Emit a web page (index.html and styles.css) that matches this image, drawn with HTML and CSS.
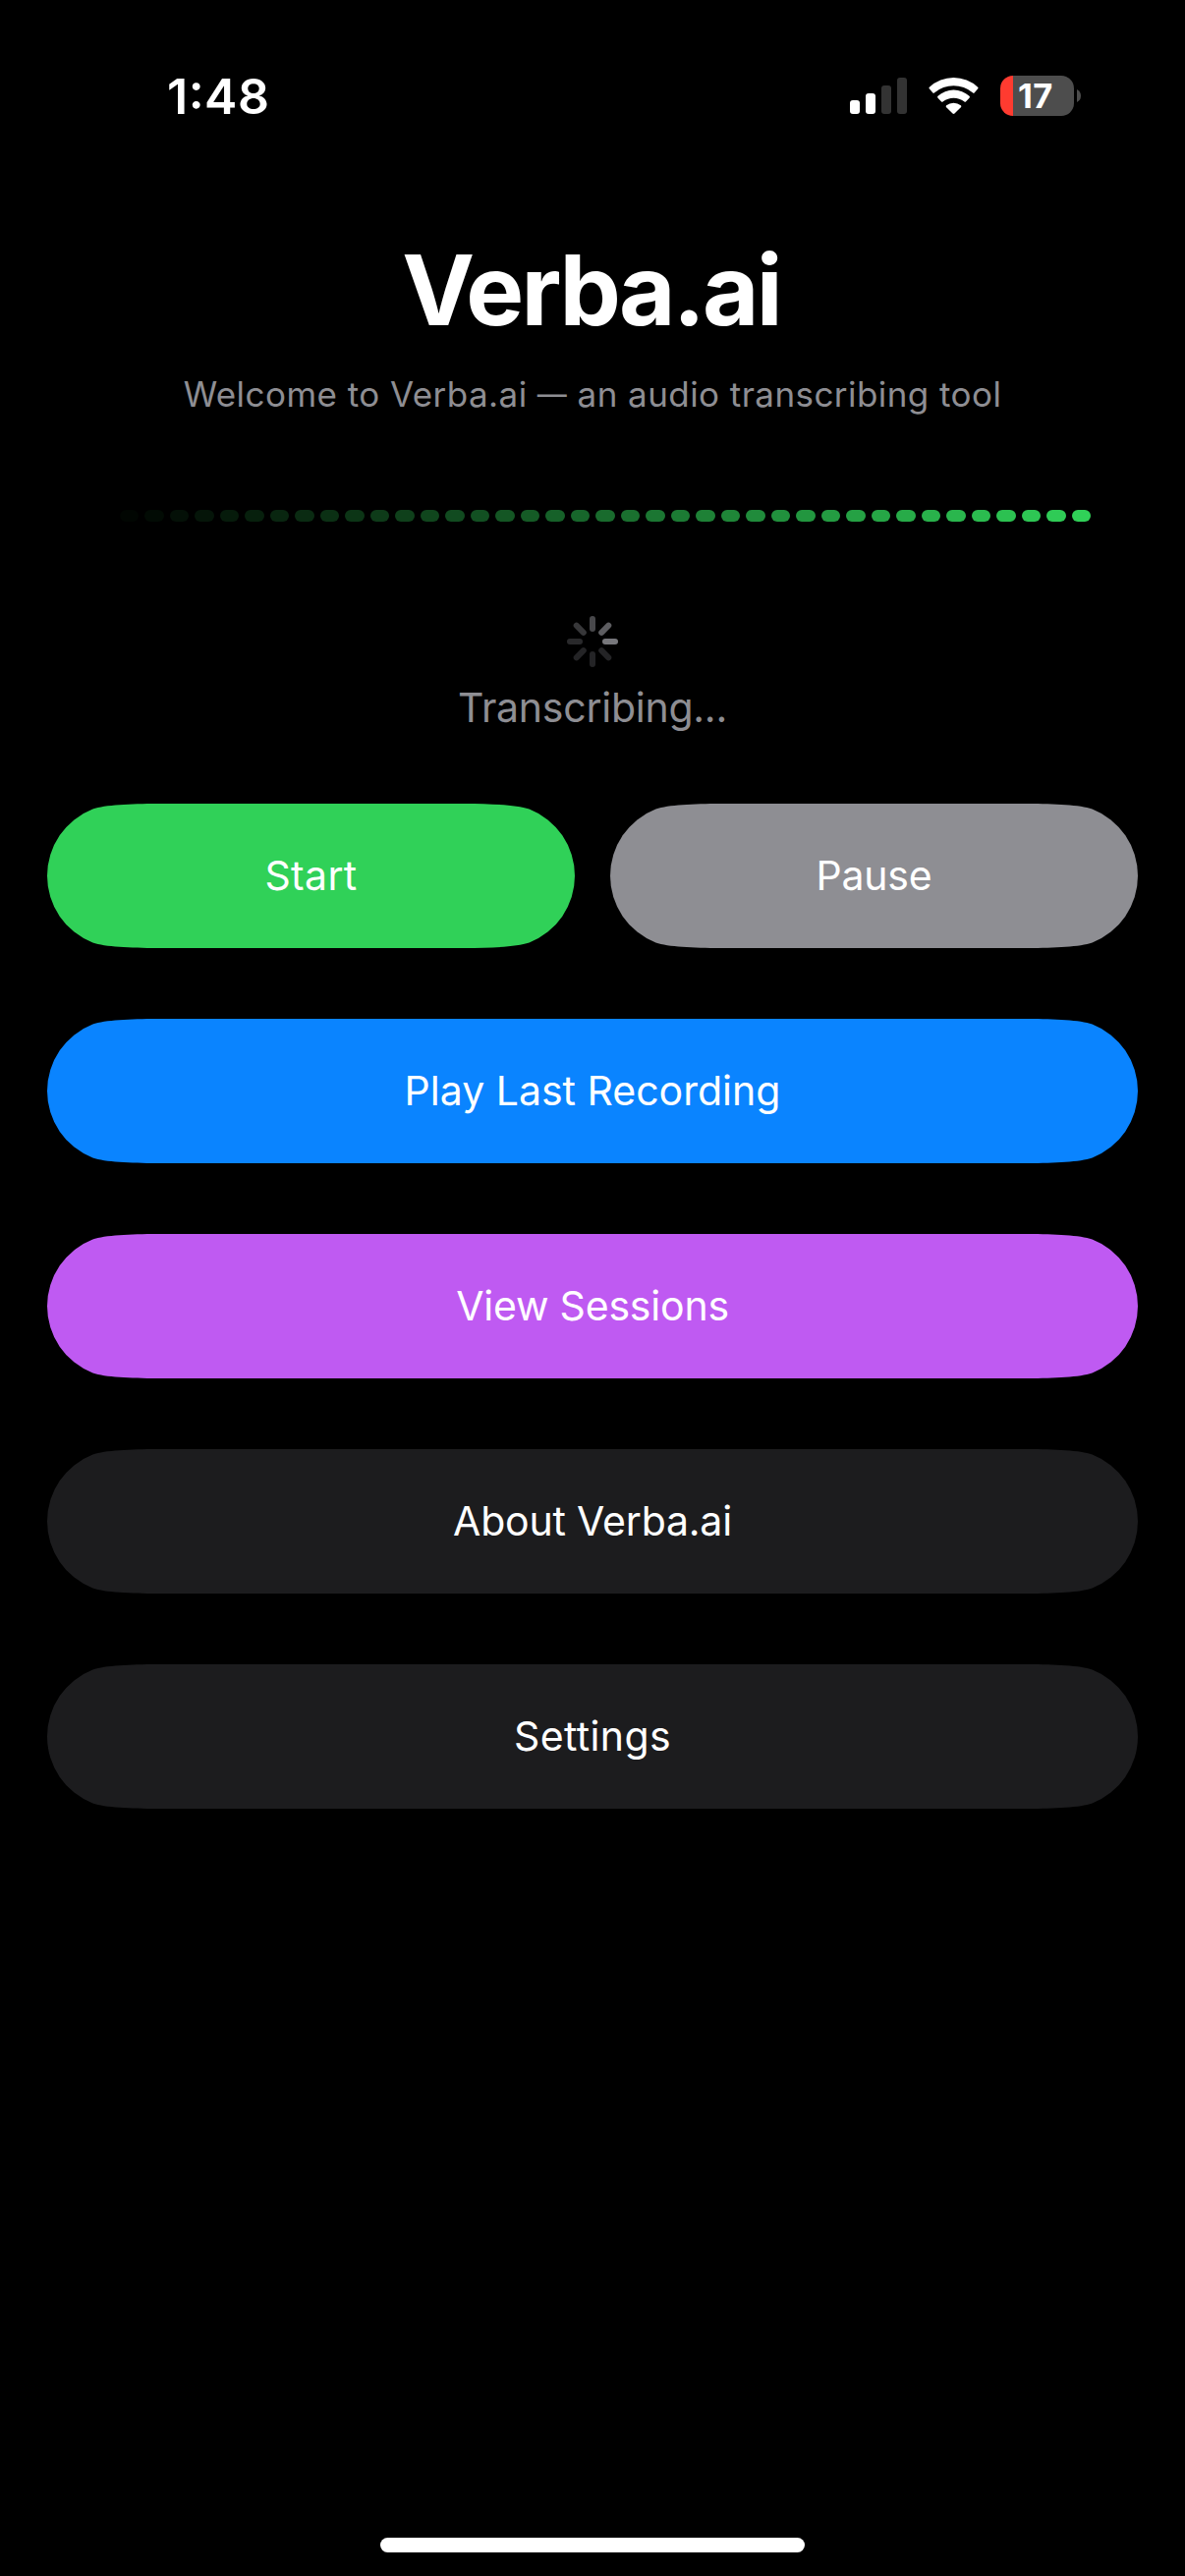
FILE: index.html
```html
<!DOCTYPE html>
<html lang="en">
<head>
<meta charset="utf-8">
<title>Verba.ai</title>
<link rel="stylesheet" href="styles.css">
</head>
<body>
<div class="screen">
  <header class="status-bar">
    <span class="time">1:48</span>
    <div class="indicators">
      <div class="signal"><i class="on s1"></i><i class="on s2"></i><i class="s3"></i><i class="s4"></i></div>
      <svg class="wifi" viewBox="315 57 152 111" aria-hidden="true">
        <path d="M318 92Q314 89 317 86A109 109 0 0 1 465 86Q468 89 464 92L455 103Q452 106 449 103A89 89 0 0 0 333 103Q330 106 327 103Z"/>
        <path d="M343 119Q340 116 343 113A72 72 0 0 1 439 113Q442 116 439 119L429 130Q426 133 423 130A54 54 0 0 0 359 130Q356 133 353 130Z"/>
        <path d="M369 148Q366 145 369 142A34 34 0 0 1 413 142Q416 145 413 148L394 166.500Q391 169 388 166.500Z"/>
      </svg>
      <div class="battery">
        <div class="cell"><span>17</span></div>
        <svg class="nub" viewBox="0 0 4 13"><path d="M0 0Q4 2 4 6.500T0 13Z"/></svg>
      </div>
    </div>
  </header>

  <main class="content">
    <h1>Verba.ai</h1>
    <p class="subtitle">Welcome to Verba.ai <span class="dash">—</span> an audio transcribing tool</p>
    <div class="levels" id="levels"></div>
    <svg class="spinner" viewBox="-26 -26 52 52" aria-hidden="true">
      <path stroke="#242426" d="M0 13V23M9.200 9.200L16.300 16.300M-9.200 9.200L-16.300 16.300"/>
      <path stroke="#29292b" d="M-13 0H-23"/>
      <path stroke="#373739" d="M-9.200-9.200L-16.300-16.300"/>
      <path stroke="#48484b" d="M0-13V-23"/>
      <path stroke="#5d5d61" d="M9.200-9.200L16.300-16.300"/>
      <path stroke="#77777b" d="M13 0H23"/>
    </svg>
    <p class="progress">Transcribing...</p>
    <div class="actions">
      <div class="pair">
        <button class="btn half green loose">Start</button>
        <button class="btn half gray tight">Pause</button>
      </div>
      <button class="btn blue">Play Last Recording</button>
      <button class="btn purple tight">View Sessions</button>
      <button class="btn dark tight">About Verba.ai</button>
      <button class="btn dark loose">Settings</button>
    </div>
  </main>
  <div class="home-indicator"></div>
</div>
<script src="levels.js"></script>
</body>
</html>
```
FILE: styles.css
```css
* { box-sizing: border-box; margin: 0; padding: 0; }
body { background: #000; }
.screen {
  width: 1206px;
  height: 2622px;
  background: #000;
  color: #fff;
  font-family: Inter, "Liberation Sans", sans-serif;
  display: flex;
  flex-direction: column;
  overflow: hidden;
}
.status-bar {
  height: 195px;
  padding: 77px 106px 0 170px;
  display: flex;
  justify-content: space-between;
  align-items: flex-start;
}
.time {
  font-size: 50px;
  font-weight: 600;
  line-height: 42px;
  letter-spacing: 0.5px;
  font-feature-settings: "case";
}
.indicators { display: flex; height: 41px; }
.signal { display: flex; gap: 6px; align-items: flex-end; height: 39px; margin-right: 22px; }
.signal i { width: 10px; border-radius: 3px; background: #333; }
.signal .on { background: #fff; }
.s1 { height: 14px; }
.s2 { height: 21px; }
.s3 { height: 29px; }
.s4 { height: 37px; }
.wifi { width: 51px; height: 37px; margin: 2px 22px 0 0; fill: #fff; }
.battery { display: flex; align-items: center; gap: 3px; }
.cell {
  width: 75px;
  height: 41px;
  border-radius: 13px;
  background: linear-gradient(90deg, #ff3b30 13px, #4d4d4d 13px);
  padding-left: 18px;
  font-size: 34.5px;
  font-weight: 700;
  line-height: 41px;
  letter-spacing: 0.5px;
}
.nub { width: 4px; height: 13px; fill: #4d4d4d; }

.content { flex: 1; padding: 0 48px; display: flex; flex-direction: column; align-items: center; }
h1 { margin-top: 40px; padding-right: 3px; font-size: 99px; font-weight: 700; line-height: 120px; letter-spacing: -2.8px; white-space: nowrap; }
.subtitle { margin-top: 24px; font-size: 35px; line-height: 44px; letter-spacing: 0.44px; color: #8e8e93; white-space: nowrap; }
.dash { font-size: 30px; line-height: 0; vertical-align: 2px; }
.levels { width: 1014px; height: 12px; margin-top: 96px; display: flex; gap: 6px; }
.levels i { flex: 1; border-radius: 6px; background: #30d158; }
.spinner { width: 52px; height: 52px; margin-top: 96px; fill: none; stroke-width: 6; stroke-linecap: round; }
.progress { margin-top: 16px; font-size: 41px; line-height: 50px; letter-spacing: -0.25px; color: #8e8e93; white-space: nowrap; }
.actions { width: 1110px; margin-top: 73px; display: flex; flex-direction: column; gap: 72px; }
.pair { display: flex; gap: 36px; }
.btn {
  width: 100%;
  height: 147px;
  padding-bottom: 2px;
  border: 0;
  font: 400 41px/50px Inter, "Liberation Sans", sans-serif;
  color: #fff;
  clip-path: path("M112.400 0H997.600C1026 0.200 1051 1.200 1063.600 5.500A73.030 73.030 0 0 1 1063.600 141.500C1051 145.800 1026 146.800 997.600 147H112.400C84 146.800 59 145.800 46.400 141.500A73.030 73.030 0 0 1 46.400 5.500C59 1.200 84 0.200 112.400 0Z");
}
.half {
  width: 537px;
  clip-path: path("M112.400 0H424.600C453 0.200 478 1.200 490.600 5.500A73.030 73.030 0 0 1 490.600 141.500C478 145.800 453 146.800 424.600 147H112.400C84 146.800 59 145.800 46.400 141.500A73.030 73.030 0 0 1 46.400 5.500C59 1.200 84 0.200 112.400 0Z");
}
.tight { letter-spacing: -0.2px; }
.loose { letter-spacing: 0.35px; }
.green { background: #30d158; }
.gray { background: #8e8e93; }
.blue { background: #0a84ff; }
.purple { background: #bf5af2; }
.dark { background: #1c1c1e; }
.home-indicator { width: 432px; height: 15px; margin: 0 auto 24px; border-radius: 7.5px; background: #fff; }
```
FILE: levels.js
```js
// Forty level segments that fade in from left to right.
const levels = document.getElementById("levels");
for (let i = 0; i < 40; i++) {
  const segment = document.createElement("i");
  segment.style.opacity = i / 39;
  levels.appendChild(segment);
}
```
